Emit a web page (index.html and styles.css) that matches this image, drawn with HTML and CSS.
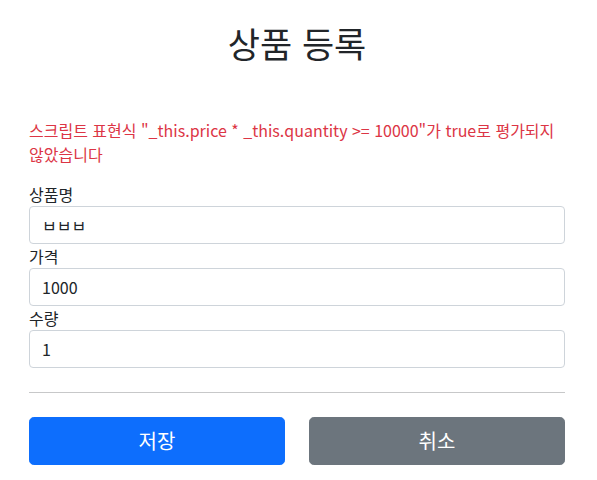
FILE: index.html
```html
<!DOCTYPE html>
<html lang="ko">
<head>
<meta charset="utf-8">
<title>상품 등록</title>
<link rel="stylesheet" href="styles.css">
</head>
<body>
<div class="container">
  <div class="header">
    <h2 class="title">상품 등록</h2>
  </div>
  <form class="form">
    <p class="field-error">스크립트 표현식 "_this.price * _this.quantity &gt;= 10000"가 true로 평가되지 않았습니다</p>
    <div class="field">
      <label class="label" for="itemName">상품명</label>
      <input class="control" id="itemName" type="text" value="ㅂㅂㅂ">
    </div>
    <div class="field">
      <label class="label" for="price">가격</label>
      <input class="control" id="price" type="text" value="1000">
    </div>
    <div class="field">
      <label class="label" for="quantity">수량</label>
      <input class="control" id="quantity" type="text" value="1">
    </div>
    <hr class="divider">
    <div class="actions">
      <button class="btn btn-primary" type="button">저장</button>
      <button class="btn btn-secondary" type="button">취소</button>
    </div>
  </form>
</div>
</body>
</html>
```

FILE: styles.css
```css
* { box-sizing: border-box; }
html, body { margin: 0; padding: 0; background: #fff; }
body {
  font-family: "Noto Sans CJK KR", "Noto Sans", sans-serif;
  font-size: 16px;
  line-height: 1.5;
  color: #212529;
}
.container {
  width: 560px;
  margin-left: 17px;
  padding: 0 12px;
}
.header {
  padding: 24px 0 48px;
  text-align: center;
}
.title {
  margin: 0 0 8px;
  font-size: 35px;
  font-weight: 400;
  line-height: 38px;
  height: 38px;
}
.form { margin: 0; }
.field-error {
  margin: 0 0 16px;
  color: #dc3545;
}
.field { display: flex; flex-direction: column; }
.label { display: block; }
.control {
  display: block;
  width: 100%;
  height: 38px;
  padding: 6px 12px;
  font: inherit;
  color: #212529;
  background: #fff;
  border: 1px solid #ced4da;
  border-radius: 4px;
  outline: none;
}
.divider {
  margin: 24px 0;
  border: 0;
  height: 1px;
  background: #212529;
  opacity: .25;
}
.actions {
  display: grid;
  grid-template-columns: 1fr 1fr;
  gap: 24px;
}
.btn {
  height: 48px;
  padding: 8px 16px;
  font: inherit;
  font-size: 20px;
  line-height: 1.5;
  color: #fff;
  border: 1px solid transparent;
  border-radius: 4.8px;
  cursor: pointer;
}
.btn-primary { background: #0d6efd; border-color: #0d6efd; }
.btn-secondary { background: #6c757d; border-color: #6c757d; }
```
